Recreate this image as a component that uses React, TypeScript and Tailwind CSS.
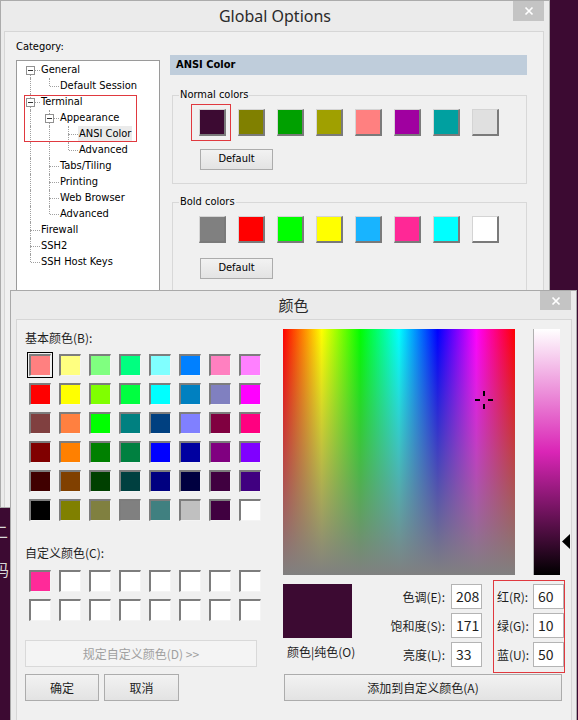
import React from "react"

const UI = "font-['DejaVu_Sans_Condensed','DejaVu_Sans',sans-serif] text-[11px] text-black"
const CJK = "font-['Noto_Sans_CJK_SC',sans-serif] text-[12px] text-[#1e1e1e]"
const BTN =
  "flex items-center justify-center border border-[#acacac] bg-linear-to-b from-[#f2f2f2] to-[#e3e3e3]"

type TreeNode = { label: string; children?: TreeNode[]; selected?: boolean }
type Row = { label: string; guides: boolean[]; last: boolean; open: boolean; first: boolean; selected?: boolean }

const tree: TreeNode[] = [
  { label: "General", children: [{ label: "Default Session" }] },
  {
    label: "Terminal",
    children: [
      { label: "Appearance", children: [{ label: "ANSI Color", selected: true }, { label: "Advanced" }] },
      { label: "Tabs/Tiling" },
      { label: "Printing" },
      { label: "Web Browser" },
      { label: "Advanced" },
    ],
  },
  { label: "Firewall" },
  { label: "SSH2" },
  { label: "SSH Host Keys" },
]

function flatten(nodes: TreeNode[], guides: boolean[] = [], out: Row[] = []) {
  nodes.forEach((n, i) => {
    const last = i === nodes.length - 1
    out.push({ label: n.label, guides, last, open: !!n.children, first: out.length === 0, selected: n.selected })
    if (n.children) flatten(n.children, [...guides, !last], out)
  })
  return out
}

const normalColors = [
  "bg-[#3c0a32]", "bg-[#808000]", "bg-[#00a000]", "bg-[#a0a000]",
  "bg-[#ff8080]", "bg-[#a000a0]", "bg-[#00a0a0]", "bg-[#e0e0e0]",
]
const boldColors = [
  "bg-[#808080]", "bg-[#ff0000]", "bg-[#00ff00]", "bg-[#ffff00]",
  "bg-[#18b4ff]", "bg-[#ff2896]", "bg-[#00ffff]", "bg-[#ffffff]",
]

const basicColors = [
  "bg-[#ff8080]", "bg-[#ffff80]", "bg-[#80ff80]", "bg-[#00ff80]", "bg-[#80ffff]", "bg-[#0080ff]", "bg-[#ff80c0]", "bg-[#ff80ff]",
  "bg-[#ff0000]", "bg-[#ffff00]", "bg-[#80ff00]", "bg-[#00ff40]", "bg-[#00ffff]", "bg-[#0080c0]", "bg-[#8080c0]", "bg-[#ff00ff]",
  "bg-[#804040]", "bg-[#ff8040]", "bg-[#00ff00]", "bg-[#008080]", "bg-[#004080]", "bg-[#8080ff]", "bg-[#800040]", "bg-[#ff0080]",
  "bg-[#800000]", "bg-[#ff8000]", "bg-[#008000]", "bg-[#008040]", "bg-[#0000ff]", "bg-[#0000a0]", "bg-[#800080]", "bg-[#8000ff]",
  "bg-[#400000]", "bg-[#804000]", "bg-[#004000]", "bg-[#004040]", "bg-[#000080]", "bg-[#000040]", "bg-[#400040]", "bg-[#400080]",
  "bg-[#000000]", "bg-[#808000]", "bg-[#808040]", "bg-[#808080]", "bg-[#408080]", "bg-[#c0c0c0]", "bg-[#400040]", "bg-[#ffffff]",
]
const customColors = ["bg-[#ff2a99]", ...Array(15).fill("bg-white")]

function CloseButton({ className }: { className: string }) {
  return (
    <div className={`absolute flex items-center justify-center bg-[#c4c4c4] ${className}`}>
      <svg width="10" height="10" viewBox="0 0 10 10">
        <path d="M1.5 1.5l7 7M8.5 1.5l-7 7" stroke="#fff" strokeWidth="1.7" />
      </svg>
    </div>
  )
}

function TreeRow({ r }: { r: Row }) {
  const dot = "absolute border-dotted border-[#a0a0a0]"
  return (
    <div className="flex h-[16px]">
      {r.guides.map((g, i) => (
        <div key={i} className="relative w-[19px] shrink-0">
          {g && <span className={`${dot} left-[9px] top-0 h-full border-l`} />}
        </div>
      ))}
      <div className="relative w-[19px] shrink-0">
        {!r.first && <span className={`${dot} left-[9px] top-0 h-[8px] border-l`} />}
        {!r.last && <span className={`${dot} left-[9px] top-[8px] h-[8px] border-l`} />}
        <span className={`${dot} left-[10px] top-[8px] w-[9px] border-t`} />
        {r.open && (
          <span className="absolute left-[5px] top-[4px] flex h-[9px] w-[9px] items-center justify-center border border-[#919191] bg-white">
            <span className="h-[1px] w-[5px] bg-[#333]" />
          </span>
        )}
      </div>
      <span className={`flex items-center px-[1px] leading-[14px] ${r.selected ? "bg-[#ebebeb]" : ""}`}>{r.label}</span>
    </div>
  )
}

function ColorGroup({ title, colors, mt, btnGap, selectFirst }: { title: string; colors: string[]; mt: string; btnGap: string; selectFirst?: boolean }) {
  return (
    <fieldset className={`ml-[2px] w-[355px] border border-[#d8d8d8] pb-[13px] ${mt}`}>
      <legend className="ml-[6px] px-[1px] leading-[16px]">{title}</legend>
      <div className="ml-[26px] mt-[6px] flex gap-[12px]">
        {colors.map((c, i) => (
          <div key={i} className="relative">
            <div className={`h-[27px] w-[27px] border-l border-t border-r-2 border-b-2 border-l-[#d4d4d4] border-t-[#d4d4d4] border-r-[#7a7a7a] border-b-[#7a7a7a] ${c}`} />
            {selectFirst && i === 0 && (
              <span className="absolute -left-[8px] -top-[5px] h-[37px] w-[40px] border border-[#e0393f]" />
            )}
          </div>
        ))}
      </div>
      <button className={`${BTN} ml-[27px] h-[21px] w-[73px] ${btnGap}`}>Default</button>
    </fieldset>
  )
}

function GlobalOptions() {
  const rows = flatten(tree)
  return (
    <div className={`absolute left-0 top-0 flex h-[508px] w-[550px] flex-col border border-[#ababab] bg-[#ebebeb] ${UI}`}>
      <div className="relative flex h-[30px] shrink-0 items-center justify-center">
        <span className="font-['Noto_Sans',sans-serif] text-[16px] text-[#2a2a2a]">Global Options</span>
        <CloseButton className="right-[5px] top-0 h-[20px] w-[31px]" />
      </div>
      <div className="ml-[3px] mr-[5px] flex flex-1 border-l border-r border-t border-[#d6d6d6] bg-[#f0f0f0] pl-[11px] pt-[7px]">
        <div className="w-[144px] shrink-0">
          <div className="leading-[16px]">Category:</div>
          <div className="relative mt-[5px] h-[240px] border border-[#9a9a9a] bg-white pl-[4px] pt-[1px]">
            {rows.map((r, i) => (
              <TreeRow key={i} r={r} />
            ))}
            <span className="absolute left-[7px] top-[34px] h-[47px] w-[113px] border border-[#e0393f]" />
          </div>
        </div>
        <div className="ml-[10px] w-[357px] pt-[16px]">
          <div className="flex h-[20px] items-center bg-[#bfcddb] pl-[6px] font-bold">ANSI Color</div>
          <ColorGroup title="Normal colors" colors={normalColors} mt="mt-[12px]" btnGap="mt-[13px]" selectFirst />
          <ColorGroup title="Bold colors" colors={boldColors} mt="mt-[10px]" btnGap="mt-[15px]" />
        </div>
      </div>
    </div>
  )
}

function SwatchGrid({ colors, selectFirst }: { colors: string[]; selectFirst?: boolean }) {
  return (
    <div className="ml-[2px] grid w-[236px] grid-cols-8 gap-x-[4px] gap-y-[3px]">
      {colors.map((c, i) => (
        <div
          key={i}
          className={`flex h-[26px] w-[26px] items-center justify-center ${selectFirst && i === 0 ? "border border-black" : ""}`}
        >
          <div className={`h-[22px] w-[22px] border-l-2 border-t-2 border-r border-b border-l-[#7d7d7d] border-t-[#7d7d7d] border-r-[#f4f4f4] border-b-[#f4f4f4] ${c}`} />
        </div>
      ))}
    </div>
  )
}

function ColorDialog() {
  const hsl = [
    ["色调(E):", "208"],
    ["饱和度(S):", "171"],
    ["亮度(L):", "33"],
  ]
  const rgb = [
    ["红(R):", "60"],
    ["绿(G):", "10"],
    ["蓝(U):", "50"],
  ]
  const input =
    "flex h-[25px] w-[31px] items-center border border-[#b4b4b4] bg-white pl-[4px] font-['Noto_Sans_CJK_SC',sans-serif] text-[14px] text-[#1e1e1e]"
  return (
    <div className={`absolute left-[10px] top-[290px] flex h-[440px] w-[567px] flex-col border border-[#a9a9a9] bg-[#ebebeb] ${CJK}`}>
      <div className="relative flex h-[28px] shrink-0 items-center justify-center">
        <span className="text-[15px] text-[#2a2a2a]">颜色</span>
        <CloseButton className="right-[5px] top-0 h-[19px] w-[31px]" />
      </div>
      <div className="ml-[5px] mr-[4px] flex flex-1 border-l border-r border-t border-[#d6d6d6] bg-[#f0f0f0]">
        <div className="w-[241px] shrink-0 pl-[8px] pt-[10px]">
          <div className="leading-[16px]">基本颜色(B):</div>
          <div className="mt-[6px]">
            <SwatchGrid colors={basicColors} selectFirst />
          </div>
          <div className="mt-[22px] leading-[16px]">自定义颜色(C):</div>
          <div className="mt-[7px]">
            <SwatchGrid colors={customColors} />
          </div>
          <div className="mt-[17px] flex h-[27px] w-[232px] items-center justify-center border border-[#d9d9d9] bg-[#f4f4f4] text-[#a0a0a0]">
            规定自定义颜色(D) &gt;&gt;
          </div>
          <div className="mt-[7px] flex gap-[5px]">
            <button className={`${BTN} h-[27px] w-[74px]`}>确定</button>
            <button className={`${BTN} h-[27px] w-[75px]`}>取消</button>
          </div>
        </div>
        <div className="ml-[25px] w-[290px] pt-[9px]">
          <div className="flex gap-[18px]">
            <div className="relative h-[246px] w-[232px] bg-[linear-gradient(to_bottom,#80808000,#808080),linear-gradient(to_right,#ff0000,#ffff00,#00ff00,#00ffff,#0000ff,#ff00ff,#ff0000)]">
              <svg className="absolute left-[191px] top-[61px]" width="20" height="20" viewBox="0 0 20 20">
                <rect x="9" y="1" width="2" height="5" fill="#000" />
                <rect x="9" y="14" width="2" height="5" fill="#000" />
                <rect x="1" y="9" width="5" height="2" fill="#000" />
                <rect x="14" y="9" width="5" height="2" fill="#000" />
              </svg>
            </div>
            <div className="relative">
              <div className="h-[246px] w-[27px] border-l border-[#b0b0b0] bg-[linear-gradient(to_bottom,#ffffff,#da25b6,#000000)]" />
              <svg className="absolute left-[29px] top-[205px]" width="8" height="15" viewBox="0 0 8 15">
                <polygon points="8,0 0,7.5 8,15" fill="#000" />
              </svg>
            </div>
          </div>
          <div className="mt-[5px] flex">
            <div className="mt-[4px] w-[69px] shrink-0">
              <div className="h-[54px] w-[69px] bg-[#3c0a32]" />
              <div className="mt-[6px] whitespace-nowrap pl-[4px] leading-[16px]">颜色|纯色(O)</div>
            </div>
            <div className="mt-[4px] flex w-[130px] flex-col gap-[4px]">
              {hsl.map(([l, v]) => (
                <div key={l} className="flex items-center">
                  <span className="flex-1 pr-[6px] text-right">{l}</span>
                  <span className={input}>{v}</span>
                </div>
              ))}
            </div>
            <div className="ml-[11px] flex h-[93px] w-[72px] flex-col gap-[4px] border border-[#e0393f] pl-[3px] pt-[3px]">
              {rgb.map(([l, v]) => (
                <div key={l} className="flex items-center">
                  <span className="w-[36px]">{l}</span>
                  <span className={input}>{v}</span>
                </div>
              ))}
            </div>
          </div>
          <button className={`${BTN} ml-[1px] mt-[1px] h-[27px] w-[278px]`}>添加到自定义颜色(A)</button>
        </div>
      </div>
    </div>
  )
}

export default function App() {
  return (
    <div className="relative h-[720px] w-[578px] overflow-hidden bg-[#3c0a32]">
      <div className="pt-[512px] font-['Noto_Sans_CJK_SC',sans-serif] text-[16px] leading-[38px] text-[#d8d8d8]">
        <div className="-ml-[8px]">二</div>
        <div className="-ml-[7px]">码</div>
      </div>
      <GlobalOptions />
      <ColorDialog />
    </div>
  )
}
